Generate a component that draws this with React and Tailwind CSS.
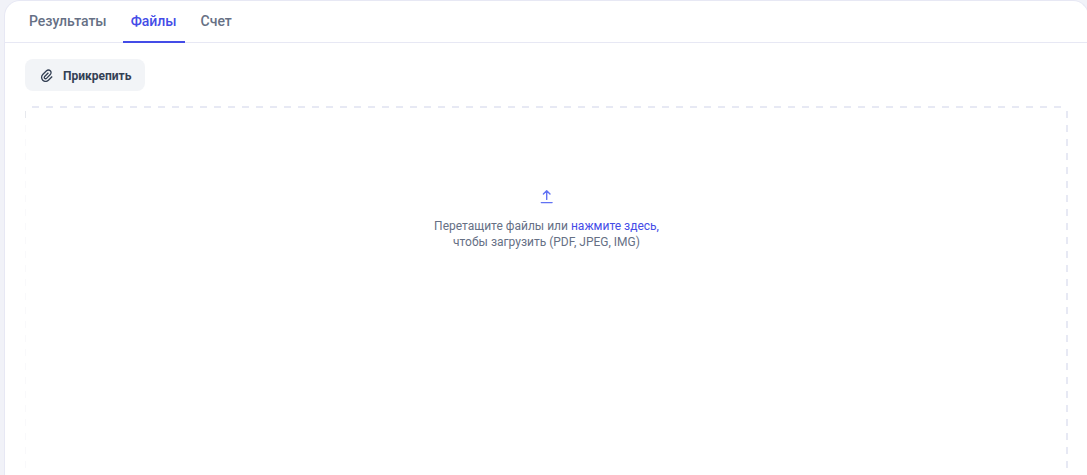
import React from "react";
import clsx from "clsx";
import { RiAttachment2 } from "react-icons/ri";

const TABS = [
	{ id: "results", label: "Результаты" },
	{ id: "files", label: "Файлы" },
	{ id: "bill", label: "Счет" },
];

function UploadIcon({ className }) {
	return (
		<svg
			className={className}
			viewBox="0 0 16 16"
			fill="none"
			stroke="currentColor"
			strokeWidth="1.4"
			strokeLinecap="round"
			strokeLinejoin="round"
			aria-hidden="true"
		>
			<path d="M2.3 14.6h10.8M7.7 11.4V2.8M4.4 6 7.7 2.7 11 6" />
		</svg>
	);
}

/** Tab strip, the active tab's underline covers the strip's border */
function Tabs({ value, onChange }) {
	return (
		<div role="tablist" className="flex gap-2 border-b border-[#e7e8f4] px-4">
			{TABS.map((tab) => (
				<button
					key={tab.id}
					type="button"
					role="tab"
					aria-selected={value === tab.id}
					onClick={() => onChange(tab.id)}
					className={clsx(
						"-mb-px border-b-2 px-2 py-2.5 text-sm font-medium",
						value === tab.id
							? "border-[#444ce7] text-[#444ce7]"
							: "border-transparent text-[#667085]"
					)}
				>
					{tab.label}
				</button>
			))}
		</div>
	);
}

/** Dashed outline of the drop zone */
function DashedFrame() {
	return (
		<svg
			className="pointer-events-none absolute inset-0 h-full w-full"
			fill="none"
			stroke="#e7e9f4"
			strokeDasharray="7 7"
			aria-hidden="true"
		>
			<line x1="7" y1="1" x2="100%" y2="1" strokeWidth="2" />
			<svg x="100%" overflow="visible">
				<line x1="-1" y1="5" x2="-1" y2="2000" strokeWidth="2" />
			</svg>
			<line x1="0.5" y1="5" x2="0.5" y2="12" stroke="#e7e9ee" />
			<line x1="0.5" y1="19" x2="0.5" y2="2000" stroke="#f9f9fb" />
		</svg>
	);
}

function DropZone({ onPick }) {
	return (
		<div className="relative mt-[15px] flex w-full flex-1 flex-col items-center pt-[82px] text-center">
			<DashedFrame />
			<UploadIcon className="h-4 w-4 text-[#6172f3]" />
			<p className="mt-3.5 text-xs text-[#667085]">
				Перетащите файлы или{" "}
				<button type="button" onClick={onPick} className="text-[#444ce7]">
					нажмите здесь,
				</button>
				<br />
				чтобы загрузить (PDF, JPEG, IMG)
			</p>
		</div>
	);
}

export default function App() {
	const [tab, setTab] = React.useState("files");
	const inputRef = React.useRef(null);
	const pick = () => inputRef.current?.click();

	return (
		<div className="flex h-screen flex-col overflow-hidden bg-[#f1f2f8] pl-1 font-['Roboto',sans-serif]">
			<main className="-mr-0.5 flex flex-1 flex-col rounded-t-2xl border border-b-0 border-[#e7e8f4] bg-white">
				<Tabs value={tab} onChange={setTab} />
				<section className="flex flex-1 flex-col items-start px-5 pt-4">
					<button
						type="button"
						onClick={pick}
						className="flex h-8 items-center gap-2 rounded-lg bg-[#f2f4f7] px-3.5 pt-0.5 text-xs font-bold text-[#344054]"
					>
						<RiAttachment2 className="h-4 w-4" aria-hidden="true" />
						Прикрепить
					</button>
					<input
						ref={inputRef}
						type="file"
						multiple
						accept=".pdf,.jpg,.jpeg,.img"
						aria-label="Прикрепить"
						className="hidden"
					/>
					<DropZone onPick={pick} />
				</section>
			</main>
		</div>
	);
}
